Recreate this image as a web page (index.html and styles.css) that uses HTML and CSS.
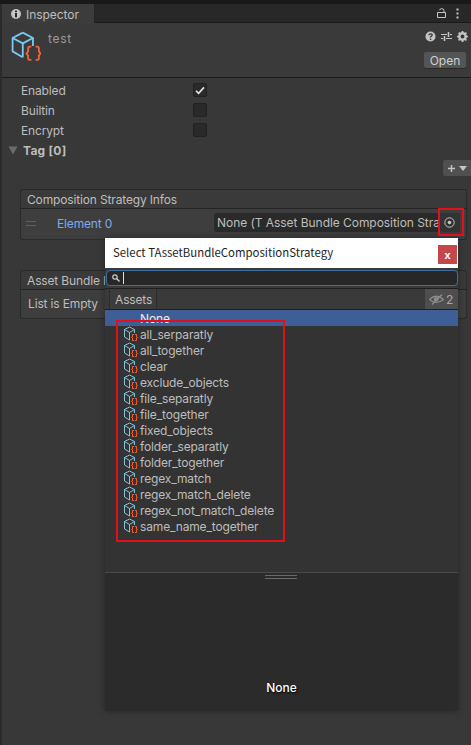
FILE: index.html
```html
<!DOCTYPE html>
<html lang="en">
<head>
    <meta charset="UTF-8">
    <title>Inspector</title>
    <link rel="stylesheet" href="styles.css">
</head>
<body>
    <svg class="defs" width="0" height="0">
        <symbol id="script" viewBox="0 0 28 28">
            <path d="M11 1.5 L20.5 6.5 V14 M11 1.5 L1.5 6.5 V19 L11 24.5 M1.5 6.5 L11 11.5 L20.5 6.5 M11 11.5 V24.5" fill="none" stroke="#79c9f2" stroke-width="1.7" stroke-linejoin="round"/>
            <path d="M19 14.5 H17.5 Q16 14.5 16 16 V19 L14.5 21 L16 23 V26 Q16 27 17.5 27 H19 M23 14.5 H24.5 Q26 14.5 26 16 V19 L27.5 21 L26 23 V26 Q26 27 24.5 27 H23" fill="none" stroke="#f0663a" stroke-width="1.7"/>
        </symbol>
        <symbol id="script-small" viewBox="0 0 14 16">
            <path d="M5.5 1 L10.5 3.5 V7 M5.5 1 L0.5 3.5 V11 L5.5 14 M0.5 3.5 L5.5 6.5 L10.5 3.5 M5.5 6.5 V14" fill="none" stroke="#93cfec" stroke-width="0.9"/>
            <path d="M10 8.5 H8.5 V11 L7.5 11.5 L8.5 12 V14.5 H10 M11 8.5 H12.5 V11 L13.5 11.5 L12.5 12 V14.5 H11" fill="none" stroke="#f5622f" stroke-width="1"/>
        </symbol>
    </svg>

    <div class="top-band"></div>
    <div class="tabbar">
        <div class="tab">
            <svg class="tab-icon" width="10" height="10" viewBox="0 0 10 10"><circle cx="5" cy="5" r="5" fill="#c4c4c4"/><rect x="4" y="4" width="2" height="4.4" fill="#2c2c2c"/><rect x="4" y="1.6" width="2" height="1.6" fill="#2c2c2c"/></svg>
            <span>Inspector</span>
        </div>
        <div class="tab-tools">
            <svg width="9" height="10" viewBox="0 0 9 10"><path d="M0.5 4.5 H8.5 V9.5 H0.5 Z M7 4.5 V2.5 Q7 0.7 4.8 0.7 Q2.8 0.7 2.4 2.2" fill="none" stroke="#c4c4c4" stroke-width="1"/></svg>
            <svg width="3" height="11" viewBox="0 0 3 11"><rect x="0.5" y="0.5" width="2" height="2" fill="#c4c4c4"/><rect x="0.5" y="4.5" width="2" height="2" fill="#c4c4c4"/><rect x="0.5" y="8.5" width="2" height="2" fill="#c4c4c4"/></svg>
        </div>
    </div>

    <header class="asset-header">
        <svg class="asset-icon" width="30" height="30"><use href="#script"/></svg>
        <div class="asset-name">test</div>
        <div class="asset-side">
            <div class="asset-tools">
                <svg width="11" height="11" viewBox="0 0 11 11"><circle cx="5.5" cy="5.5" r="5" fill="#c4c4c4"/><path d="M3.8 4.3 Q3.9 2.8 5.5 2.8 Q7.2 2.8 7.2 4.1 Q7.2 5 5.5 5.8 V6.6" fill="none" stroke="#383838" stroke-width="1.3"/><rect x="4.8" y="7.5" width="1.5" height="1.4" fill="#383838"/></svg>
                <svg width="11" height="11" viewBox="0 0 11 11"><path d="M0 3.5 H6 M9 3.5 H11 M0 7.5 H2 M5 7.5 H11" stroke="#c4c4c4" fill="none"/><path d="M7.5 1 V6 M3.5 5 V10" stroke="#c4c4c4" stroke-width="1.6" fill="none"/></svg>
                <svg width="11" height="11" viewBox="0 0 11 11"><circle cx="5.5" cy="5.5" r="3.3" fill="none" stroke="#c4c4c4" stroke-width="2.2"/><path d="M5.5 0 V11 M0 5.5 H11 M1.6 1.6 L9.4 9.4 M9.4 1.6 L1.6 9.4" stroke="#c4c4c4" stroke-width="1.7"/><circle cx="5.5" cy="5.5" r="1.9" fill="#383838"/></svg>
            </div>
            <button class="open-btn">Open</button>
        </div>
    </header>

    <main class="props">
        <div class="prop-row">
            <span class="prop-label">Enabled</span>
            <span class="checkbox">
                <svg width="10" height="9" viewBox="0 0 10 9"><path d="M1 4.8 L3.6 7.4 L9 1.4" fill="none" stroke="#e6e6e6" stroke-width="1.6"/></svg>
            </span>
        </div>
        <div class="prop-row">
            <span class="prop-label">Builtin</span>
            <span class="checkbox"></span>
        </div>
        <div class="prop-row">
            <span class="prop-label">Encrypt</span>
            <span class="checkbox"></span>
        </div>
        <div class="foldout">
            <svg width="10" height="9" viewBox="0 0 10 9"><path d="M0.5 0.5 H9.5 L5 8.5 Z" fill="#6a6a6a"/></svg>
            <span>Tag [0]</span>
        </div>
        <div class="add-row">
            <div class="add-btn">
                <svg width="7" height="7" viewBox="0 0 7 7"><path d="M3.5 0 V7 M0 3.5 H7" stroke="#c4c4c4" stroke-width="1.4"/></svg>
                <svg width="8" height="5" viewBox="0 0 8 5"><path d="M0 0 H8 L4 5 Z" fill="#c4c4c4"/></svg>
            </div>
        </div>

        <section class="list-group">
            <div class="list-head">Composition Strategy Infos</div>
            <div class="list-body element-body">
                <span class="handle"></span>
                <span class="element-label">Element 0</span>
                <div class="object-field">
                    <span class="object-text">None (T Asset Bundle Composition Stra</span>
                    <span class="object-pick">
                        <svg width="11" height="11" viewBox="0 0 11 11"><circle cx="5.5" cy="5.5" r="4.7" fill="none" stroke="#c4c4c4"/><circle cx="5.5" cy="5.5" r="1.8" fill="#c4c4c4"/></svg>
                    </span>
                </div>
            </div>
        </section>

        <section class="list-group bundle-group">
            <div class="list-head">Asset Bundle Infos</div>
            <div class="list-body empty-body">List is Empty</div>
        </section>
    </main>

    <div class="edge-line"></div>

    <div class="picker">
        <div class="picker-title">
            <span class="picker-caption">Select TAssetBundleCompositionStrategy</span>
            <span class="picker-close">x</span>
        </div>
        <div class="picker-search">
            <div class="search-box">
                <svg width="8" height="8" viewBox="0 0 8 8"><circle cx="3" cy="3" r="2.2" fill="none" stroke="#d0d0d0" stroke-width="1.2"/><path d="M4.6 4.6 L7.5 7.5" stroke="#d0d0d0" stroke-width="1.4"/></svg>
                <span class="caret"></span>
            </div>
        </div>
        <div class="picker-tabs">
            <span class="assets-tab">Assets</span>
            <span class="hidden-count">
                <svg width="15" height="11" viewBox="0 0 15 11"><path d="M0.5 5.5 Q7 -1 14.5 5.5 Q7 11.5 0.5 5.5 Z" fill="none" stroke="#8a8a8a" stroke-width="1.2"/><circle cx="7.2" cy="5.2" r="2.3" fill="#8a8a8a"/><path d="M3 10.5 L13 0.5" stroke="#8a8a8a" stroke-width="1.4"/></svg>
                2
            </span>
        </div>
        <ul class="picker-list">
            <li class="picker-item selected">None</li>
            <li class="picker-item"><svg width="14" height="16"><use href="#script-small"/></svg>all_serparatly</li>
            <li class="picker-item"><svg width="14" height="16"><use href="#script-small"/></svg>all_together</li>
            <li class="picker-item"><svg width="14" height="16"><use href="#script-small"/></svg>clear</li>
            <li class="picker-item"><svg width="14" height="16"><use href="#script-small"/></svg>exclude_objects</li>
            <li class="picker-item"><svg width="14" height="16"><use href="#script-small"/></svg>file_separatly</li>
            <li class="picker-item"><svg width="14" height="16"><use href="#script-small"/></svg>file_together</li>
            <li class="picker-item"><svg width="14" height="16"><use href="#script-small"/></svg>fixed_objects</li>
            <li class="picker-item"><svg width="14" height="16"><use href="#script-small"/></svg>folder_separatly</li>
            <li class="picker-item"><svg width="14" height="16"><use href="#script-small"/></svg>folder_together</li>
            <li class="picker-item"><svg width="14" height="16"><use href="#script-small"/></svg>regex_match</li>
            <li class="picker-item"><svg width="14" height="16"><use href="#script-small"/></svg>regex_match_delete</li>
            <li class="picker-item"><svg width="14" height="16"><use href="#script-small"/></svg>regex_not_match_delete</li>
            <li class="picker-item"><svg width="14" height="16"><use href="#script-small"/></svg>same_name_together</li>
        </ul>
        <div class="picker-preview">
            <span class="grip"></span>
            <span class="preview-name">None</span>
        </div>
    </div>

    <div class="mark mark-pick"></div>
    <div class="mark mark-list"></div>
</body>
</html>
```

FILE: styles.css
```css
html, body, ul {
    padding: 0;
    margin: 0;
}
html, body {
    width: 100%;
    height: 100%;
    overflow: hidden;
}
body {
    position: relative;
    background: #383838;
    color: #bdbdbd;
    font-family: Inter, "Noto Sans", sans-serif;
    font-size: 12px;
    letter-spacing: -0.15px;
}
.defs {
    position: absolute;
}
.edge-line {
    position: absolute;
    left: 0;
    top: 4px;
    bottom: 0;
    width: 2px;
    background: #2b2b2b;
}
.top-band {
    height: 4px;
    background: #191919;
}
.tabbar {
    display: flex;
    justify-content: space-between;
    align-items: center;
    height: 18px;
    padding-left: 2px;
    padding-right: 12px;
    background: #282828;
    border-bottom: 1px solid #1a1a1a;
}
.tab {
    display: flex;
    align-self: flex-start;
    align-items: center;
    gap: 5px;
    width: 93px;
    height: 19px;
    padding-top: 1px;
    padding-left: 9px;
    box-sizing: border-box;
    background: #3c3c3c;
    border-right: 1px solid #232323;
    letter-spacing: -0.05px;
}
.tab-tools {
    display: flex;
    align-items: center;
    gap: 10px;
}
.asset-header {
    display: flex;
    height: 54px;
    border-bottom: 1px solid #1a1a1a;
    background: #3a3a3a;
    padding-left: 11px;
}
.asset-icon {
    margin-top: 8px;
}
.asset-name {
    margin-left: 7px;
    margin-top: 8px;
    color: #9a9a9a;
    letter-spacing: 0.7px;
}
.asset-side {
    margin-left: auto;
    display: flex;
    flex-direction: column;
    align-items: flex-end;
    padding-right: 3px;
}
.asset-tools {
    display: flex;
    gap: 5px;
    margin-top: 8px;
}
.open-btn {
    margin-top: 10px;
    margin-right: 2px;
    width: 42px;
    height: 16px;
    padding: 0;
    border: 0;
    border-radius: 2px;
    background: #555;
    color: #d0d0d0;
    font: 12px Inter, sans-serif;
    box-shadow: 0 1px 0 #2a2a2a;
}
.props {
    padding-top: 2px;
}
.prop-row {
    display: flex;
    align-items: center;
    height: 20px;
    padding-left: 21px;
}
.prop-label {
    width: 172px;
}
.checkbox {
    display: flex;
    align-items: center;
    justify-content: center;
    width: 12px;
    height: 12px;
    background: #2a2a2a;
    border: 1px solid #212121;
    border-radius: 2px;
}
.foldout {
    display: flex;
    align-items: center;
    gap: 5px;
    height: 20px;
    padding-left: 8px;
    font-weight: 700;
    letter-spacing: 0.25px;
}
.add-row {
    display: flex;
    justify-content: flex-end;
    height: 29px;
}
.add-btn {
    display: flex;
    align-items: center;
    justify-content: center;
    gap: 4px;
    width: 28px;
    height: 16px;
    background: #505050;
    border-radius: 2px 0 0 2px;
}
.list-group {
    margin: 0 4px 0 20px;
}
.list-head {
    box-sizing: border-box;
    height: 20px;
    line-height: 19px;
    padding-left: 6px;
    background: #3a3a3a;
    border: 1px solid #2a2a2a;
    border-bottom: 1px solid #242424;
    border-radius: 3px 3px 0 0;
}
.list-body {
    box-sizing: border-box;
    background: #3e3e3e;
    border: 1px solid #2a2a2a;
    border-top: 0;
    border-radius: 0 0 3px 3px;
}
.element-body {
    display: flex;
    align-items: flex-start;
    height: 31px;
    padding-top: 4px;
    padding-left: 5px;
}
.handle {
    width: 10px;
    height: 3px;
    margin-top: 8px;
    border-top: 1px solid #606060;
    border-bottom: 1px solid #606060;
}
.element-label {
    margin-left: 21px;
    margin-top: 3px;
    width: 157px;
    color: #7baaf0;
}
.object-field {
    display: flex;
    align-items: center;
    width: 246px;
    height: 19px;
    background: #2a2a2a;
    border-radius: 3px;
    box-sizing: border-box;
    padding-left: 3px;
}
.object-text {
    flex: 1;
    min-width: 0;
    white-space: nowrap;
    letter-spacing: -0.05px;
}
.object-pick {
    display: flex;
    align-items: center;
    justify-content: center;
    flex: none;
    width: 21px;
    height: 19px;
    background: #333;
    border-radius: 0 3px 3px 0;
}
.bundle-group {
    margin-top: 30px;
}
.empty-body {
    height: 29px;
    line-height: 28px;
    padding-left: 7px;
}
.picker {
    position: absolute;
    left: 105px;
    top: 238px;
    width: 353px;
    height: 473px;
    display: flex;
    flex-direction: column;
    background: #333;
    box-shadow: 0 0 7px rgba(0, 0, 0, 0.35);
}
.picker-title {
    display: flex;
    justify-content: space-between;
    height: 30px;
    padding: 0 1px 0 8px;
    background: #fff;
    color: #1d1d1d;
    font-family: "Noto Sans CJK KR", "Noto Sans", sans-serif;
    letter-spacing: 0;
}
.picker-caption {
    font-size: 11.4px;
    line-height: 29px;
}
.picker-close {
    display: flex;
    align-items: center;
    justify-content: center;
    width: 19px;
    height: 19px;
    margin-top: 7px;
    background: #c4474c;
    color: #fff;
    font: 700 11px "Liberation Sans", sans-serif;
}
.picker-search {
    height: 20px;
    background: #3a3a3a;
    border-bottom: 1px solid #1f1f1f;
}
.search-box {
    display: flex;
    align-items: center;
    gap: 3px;
    height: 14px;
    margin: 2px 0 0 1px;
    padding-left: 5px;
    background: #272727;
    border: 1px solid #3f6f9f;
    border-radius: 4px;
}
.caret {
    width: 1px;
    height: 12px;
    background: #ddd;
}
.picker-tabs {
    display: flex;
    justify-content: space-between;
    height: 20px;
    background: #3a3a3a;
    border-bottom: 1px solid #1f1f1f;
}
.assets-tab {
    display: flex;
    align-items: center;
    margin-left: 4px;
    padding: 0 4px 0 5px;
    border-left: 1px solid #2c2c2c;
    border-right: 1px solid #2c2c2c;
    background: #3c3c3c;
}
.hidden-count {
    display: flex;
    align-items: center;
    gap: 2px;
    width: 33px;
    padding-left: 4px;
    box-sizing: border-box;
    background: #4e4e4e;
    color: #a8a8a8;
}
.picker-list {
    list-style: none;
    flex: 1;
    background: #333;
    border-bottom: 1px solid #4a4a4a;
}
.picker-item {
    display: flex;
    align-items: center;
    height: 16px;
    padding-left: 19px;
    white-space: nowrap;
}
.picker-item svg {
    margin-right: 2px;
}
.picker-item.selected {
    padding-left: 35px;
    background: #3e5f96;
    color: #eee;
}
.picker-preview {
    position: relative;
    height: 138px;
    display: flex;
    justify-content: center;
    background: #2b2b2b;
}
.grip {
    position: absolute;
    top: 2px;
    left: 160px;
    width: 32px;
    height: 2px;
    border-top: 1px solid #6a6a6a;
    border-bottom: 1px solid #6a6a6a;
}
.preview-name {
    margin-top: 107px;
    color: #fff;
    font-weight: 500;
    letter-spacing: 0;
    text-shadow: 1px 1px 2px #000;
}
.mark {
    position: absolute;
    box-sizing: border-box;
    border: 2px solid #e0101c;
}
.mark-pick {
    left: 438px;
    top: 208px;
    width: 26px;
    height: 28px;
}
.mark-list {
    left: 116px;
    top: 320px;
    width: 169px;
    height: 222px;
}
```
